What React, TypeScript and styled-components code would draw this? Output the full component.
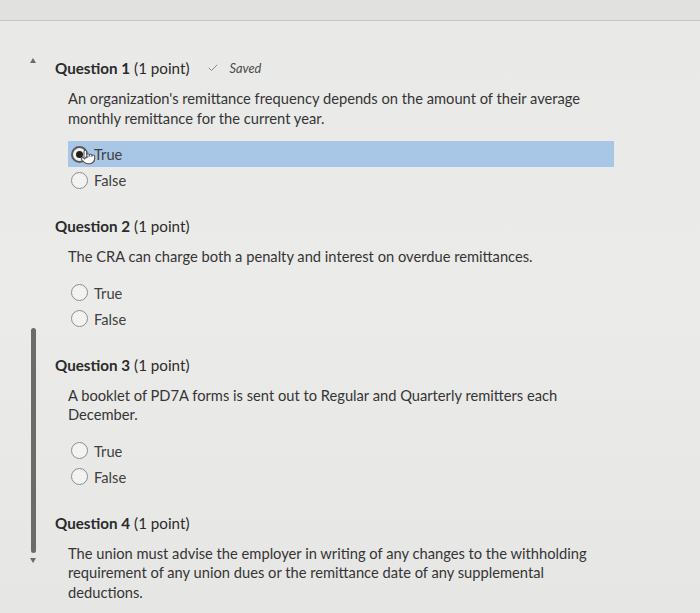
import React from 'react';
import styled, { createGlobalStyle } from 'styled-components';
import { Check, Pointer } from 'lucide-react';

const GlobalStyle = createGlobalStyle`
  html, body {
    margin: 0;
    padding: 0;
  }
  body {
    font-family: 'Lato', 'Noto Sans', sans-serif;
    background: #e7e7e5;
  }
`;

const Page = styled.div`
  position: relative;
  width: 700px;
  height: 613px;
  overflow: hidden;
  background: linear-gradient(180deg, #e9e9e7 0%, #ebebe9 50%, #e6e6e4 100%);
`;

const TopBar = styled.div`
  height: 20px;
  background: #e1e1df;
  border-bottom: 1px solid #c6c6c4;
`;

const QuestionList = styled.div`
  display: flex;
  flex-direction: column;
  gap: 23px;
  padding: 37px 0 0 55px;
`;

const QuestionBlock = styled.section`
  display: flex;
  flex-direction: column;
`;

const Header = styled.div`
  display: flex;
  align-items: center;
  height: 20px;
  font-size: 15.2px;
  color: #2b2b2b;
  margin-bottom: 11px;

  b {
    font-weight: 700;
    margin-right: 4px;
  }
`;

const SavedTag = styled.span`
  display: inline-flex;
  align-items: center;
  gap: 10px;
  margin-left: 18px;
  font-size: 12.8px;
  font-style: italic;
  color: #4a4a4a;

  svg {
    color: #8a8a8a;
  }
`;

const Body = styled.div`
  padding-left: 13px;
  display: flex;
  flex-direction: column;
`;

const Prompt = styled.p`
  margin: 0 0 13px 0;
  width: 530px;
  font-size: 14.7px;
  line-height: 19.5px;
  color: #353535;
`;

const Options = styled.div`
  display: flex;
  flex-direction: column;
`;

const Option = styled.label<{ selected?: boolean }>`
  position: relative;
  display: flex;
  align-items: center;
  gap: 6px;
  width: 546px;
  height: 26px;
  padding-left: 3px;
  box-sizing: border-box;
  font-size: 14.7px;
  color: #404040;
  background: ${p => (p.selected ? '#a8c6e6' : 'transparent')};
`;

const Radio = styled.span<{ checked?: boolean }>`
  display: inline-flex;
  align-items: center;
  justify-content: center;
  width: 17px;
  height: 17px;
  box-sizing: border-box;
  border-radius: 50%;
  border: ${p => (p.checked ? '2px solid #5a5a5a' : '1px solid #8d8d8d')};
  background: #f3f3f2;

  &::after {
    content: '';
    display: ${p => (p.checked ? 'block' : 'none')};
    width: 7px;
    height: 7px;
    border-radius: 50%;
    background: #1e1e1e;
  }
`;

const Cursor = styled.span`
  position: absolute;
  left: 12px;
  top: 8px;
  display: flex;
  svg {
    fill: #ffffff;
    color: #555;
  }
`;

const ScrollThumb = styled.div`
  position: absolute;
  left: 31px;
  top: 328px;
  width: 5px;
  height: 225px;
  border-radius: 3px;
  background: #6b6b6b;
`;

const ScrollArrow = styled.div<{ dir: 'up' | 'down' }>`
  position: absolute;
  left: 30px;
  top: ${p => (p.dir === 'up' ? '58px' : '558px')};
  width: 0;
  height: 0;
  border-left: 3.5px solid transparent;
  border-right: 3.5px solid transparent;
  ${p =>
    p.dir === 'up'
      ? 'border-bottom: 5px solid #6a6a6a;'
      : 'border-top: 5px solid #6a6a6a;'}
`;

interface Question {
  num: number;
  text: string;
  selected?: 'True' | 'False';
  saved?: boolean;
  options?: boolean;
}

const questions: Question[] = [
  {
    num: 1,
    text: "An organization's remittance frequency depends on the amount of their average monthly remittance for the current year.",
    selected: 'True',
    saved: true,
    options: true,
  },
  {
    num: 2,
    text: 'The CRA can charge both a penalty and interest on overdue remittances.',
    options: true,
  },
  {
    num: 3,
    text: 'A booklet of PD7A forms is sent out to Regular and Quarterly remitters each December.',
    options: true,
  },
  {
    num: 4,
    text: 'The union must advise the employer in writing of any changes to the withholding requirement of any union dues or the remittance date of any supplemental deductions.',
  },
];

const App: React.FC = () => {
  return (
    <Page>
      <GlobalStyle />
      <TopBar />
      <ScrollArrow dir="up" />
      <ScrollThumb />
      <ScrollArrow dir="down" />
      <QuestionList>
        {questions.map(q => (
          <QuestionBlock key={q.num}>
            <Header>
              <b>Question {q.num}</b>(1 point)
              {q.saved && (
                <SavedTag>
                  <Check size={12} strokeWidth={2} />
                  Saved
                </SavedTag>
              )}
            </Header>
            <Body>
              <Prompt>{q.text}</Prompt>
              {q.options && (
                <Options>
                  {(['True', 'False'] as const).map(opt => (
                    <Option key={opt} selected={q.selected === opt}>
                      <Radio checked={q.selected === opt} />
                      {opt}
                      {q.selected === opt && (
                        <Cursor>
                          <Pointer size={16} strokeWidth={1.6} />
                        </Cursor>
                      )}
                    </Option>
                  ))}
                </Options>
              )}
            </Body>
          </QuestionBlock>
        ))}
      </QuestionList>
    </Page>
  );
};

export default App;
